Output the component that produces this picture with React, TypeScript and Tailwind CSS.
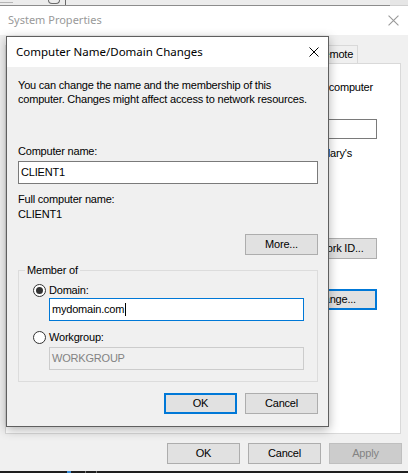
import React from 'react';

function CloseIcon({ className }: { className?: string }) {
    return (
        <svg viewBox="0 0 10 10" className={className} fill="none" stroke="currentColor" strokeWidth="1">
            <path d="M0.5 0.5 L9.5 9.5 M9.5 0.5 L0.5 9.5" />
        </svg>
    );
}

function Button({ label, variant = 'normal', width = 'w-[73px]' }: { label: string; variant?: 'normal' | 'focused' | 'disabled'; width?: string }) {
    const look =
        variant === 'focused'
            ? 'border-2 border-[#0078d7] bg-[#e1e1e1] text-black'
            : variant === 'disabled'
              ? 'border border-[#bfbfbf] bg-[#cccccc] text-[#838383]'
              : 'border border-[#adadad] bg-[#e1e1e1] text-black';
    return <div className={`flex h-[21px] shrink-0 items-center justify-center ${width} ${look}`}>{label}</div>;
}

function Radio({ checked }: { checked?: boolean }) {
    return (
        <span className="flex h-[13px] w-[13px] shrink-0 items-center justify-center rounded-full border border-[#333333] bg-white">
            {checked && <span className="h-[7px] w-[7px] rounded-full bg-[#333333]" />}
        </span>
    );
}

function TextBox({ children, state = 'normal', className = '' }: { children?: React.ReactNode; state?: 'normal' | 'focused' | 'disabled'; className?: string }) {
    const look =
        state === 'focused'
            ? 'border-[#0078d7] bg-white text-black'
            : state === 'disabled'
              ? 'border-[#cccccc] bg-[#f0f0f0] text-[#838383]'
              : 'border-[#7a7a7a] bg-white text-black';
    return <div className={`flex h-[23px] items-center border pl-[2px] ${look} ${className}`}>{children}</div>;
}

// the dialog that sits on top of System Properties
function DomainDialog() {
    return (
        <div className="absolute left-[6px] top-[36px] flex h-[391px] w-[323px] flex-col border border-[#5f5f5f] bg-[#f0f0f0] shadow-[0_3px_10px_rgba(0,0,0,0.3)]">
            {/* Title bar */}
            <div className="flex h-[30px] shrink-0 items-center justify-between bg-white pl-[9px] pr-[9px]">
                <span className="font-['Noto_Sans',sans-serif] text-[11.5px] tracking-normal">Computer Name/Domain Changes</span>
                <CloseIcon className="h-[10px] w-[10px] text-black" />
            </div>

            {/* Body */}
            <div className="flex flex-col pl-[11px] pr-[10px] pt-[11px]">
                <p className="leading-[14px]">
                    You can change the name and the membership of this
                    <br />
                    computer. Changes might affect access to network resources.
                </p>

                <div className="mt-[38px] leading-[14px]">Computer name:</div>
                <TextBox className="mt-[3px]">CLIENT1</TextBox>

                <div className="mt-[8px] leading-[14px]">Full computer name:</div>
                <div className="mt-[1px] leading-[14px]">CLIENT1</div>

                <div className="mt-[13px] flex justify-end">
                    <Button label="More..." />
                </div>

                <fieldset className="mt-[8px] border border-[#dcdcdc] pb-[11px]">
                    <legend className="ml-[6px] px-[2px] leading-[14px]">Member of</legend>
                    <div className="flex flex-col">
                        <label className="mt-[6px] flex h-[14px] items-center gap-[3px] pl-[14px]">
                            <Radio checked />
                            <span>Domain:</span>
                        </label>
                        <TextBox state="focused" className="ml-[30px] mt-[1px] w-[255px]">
                            <span>mydomain.com</span>
                            <span className="ml-[1px] h-[13px] w-px bg-black" />
                        </TextBox>
                        <label className="mt-[9px] flex h-[14px] items-center gap-[3px] pl-[14px]">
                            <Radio />
                            <span>Workgroup:</span>
                        </label>
                        <TextBox state="disabled" className="ml-[30px] mt-[3px] w-[255px]">
                            WORKGROUP
                        </TextBox>
                    </div>
                </fieldset>

                <div className="mt-[11px] flex justify-end gap-[8px]">
                    <Button label="OK" variant="focused" />
                    <Button label="Cancel" />
                </div>
            </div>
        </div>
    );
}

export default function App() {
    return (
        <div className="relative h-[473px] w-[408px] overflow-hidden bg-[#f0f0f0] font-['Liberation_Sans',Arial,sans-serif] text-[11px] tracking-[-0.2px] text-black">
            <div className="flex h-full flex-col">
                {/* Bit of the window behind */}
                <div className="flex h-[6px] shrink-0">
                    <div className="relative flex-1 border-b border-[#8c8c8c] bg-[#ececec]">
                        <span className="absolute left-0 top-[2px] h-px w-[13px] bg-[#b5b5b5]" />
                        <span className="absolute left-[48px] top-0 h-[4px] w-[12px] rounded-b-[4px] border border-t-0 border-[#6a6a6a]" />
                        <span className="absolute left-[65px] top-0 h-[5px] w-px bg-[#6a6a6a]" />
                    </div>
                    <div className="w-[18px] border-b border-[#cfcfcf] bg-[#e6e6e6]" />
                </div>

                {/* System Properties title bar */}
                <div className="flex h-[29px] shrink-0 items-center justify-between bg-white pl-[8px] pr-[9px]">
                    <span className="font-['Noto_Sans',sans-serif] text-[11px] tracking-normal text-[#999999]">System Properties</span>
                    <CloseIcon className="h-[11px] w-[11px] text-[#999999]" />
                </div>

                {/* System Properties body */}
                <div className="flex flex-1 flex-col pt-[10px]">
                    {/* Tabs */}
                    <div className="flex h-[18px] pl-[5px]">
                        <div className="flex w-[92px] items-center justify-center border border-b-0 border-[#d9d9d9] bg-white">Computer Name</div>
                        <div className="flex w-[60px] items-center justify-center border border-b-0 border-l-0 border-[#d9d9d9]">Hardware</div>
                        <div className="flex w-[60px] items-center justify-center border border-b-0 border-l-0 border-[#d9d9d9]">Advanced</div>
                        <div className="flex w-[95px] items-center justify-center border border-b-0 border-l-0 border-[#d9d9d9]">System Protection</div>
                        <div className="flex w-[46px] items-center justify-center border border-b-0 border-l-0 border-[#d9d9d9]">Remote</div>
                    </div>

                    {/* Tab page */}
                    <div className="ml-[5px] flex h-[371px] w-[396px] flex-col border border-[#d9d9d9] bg-white pt-[16px]">
                        <p className="flex justify-end whitespace-nowrap pr-[27px] leading-[14px]">
                            Windows uses the following information to identify your computer
                        </p>
                        <p className="pl-[14px] leading-[14px]">on the network.</p>

                        <div className="mt-[11px] flex items-center justify-between pl-[14px] pr-[23px]">
                            <span>Computer description:</span>
                            <div className="h-[20px] w-[230px] border border-[#7a7a7a] bg-white" />
                        </div>

                        <p className="mt-[7px] flex justify-end whitespace-nowrap pr-[48px] leading-[14px]">
                            For example: "Kitchen Computer" or "Mary's
                        </p>
                        <p className="pl-[118px] leading-[14px]">Computer".</p>

                        <div className="mt-[12px] flex gap-[30px] pl-[14px] leading-[14px]">
                            <span className="w-[104px]">Full computer name:</span>
                            <span>CLIENT1</span>
                        </div>
                        <div className="mt-[6px] flex gap-[30px] pl-[14px] leading-[14px]">
                            <span className="w-[104px]">Workgroup:</span>
                            <span>WORKGROUP</span>
                        </div>

                        <div className="mt-[18px] flex items-start justify-between pl-[14px] pr-[23px]">
                            <p className="w-[240px] leading-[14px]">To use a wizard to join a domain or workgroup, click Network ID.</p>
                            <Button label="Network ID..." width="w-[88px]" />
                        </div>

                        <div className="mt-[23px] flex items-start justify-between pl-[14px] pr-[23px]">
                            <p className="w-[240px] leading-[14px]">To rename this computer or change its domain or workgroup, click Change.</p>
                            <Button label="Change..." variant="focused" width="w-[88px]" />
                        </div>
                    </div>

                    {/* Window buttons */}
                    <div className="mt-[9px] flex justify-end gap-[8px] pr-[6px]">
                        <Button label="OK" />
                        <Button label="Cancel" />
                        <Button label="Apply" variant="disabled" />
                    </div>
                </div>

                {/* Taskbar edge */}
                <div className="relative h-[2px] shrink-0 bg-[#1f1f1f]">
                    <span className="absolute left-[67px] top-0 h-[2px] w-[4px] bg-[#3b8fd9]" />
                    <span className="absolute left-[85px] top-0 h-[2px] w-px bg-[#7a7a7a]" />
                    <span className="absolute left-[96px] top-0 h-[2px] w-px bg-[#7a7a7a]" />
                </div>
            </div>

            <DomainDialog />
        </div>
    );
}
